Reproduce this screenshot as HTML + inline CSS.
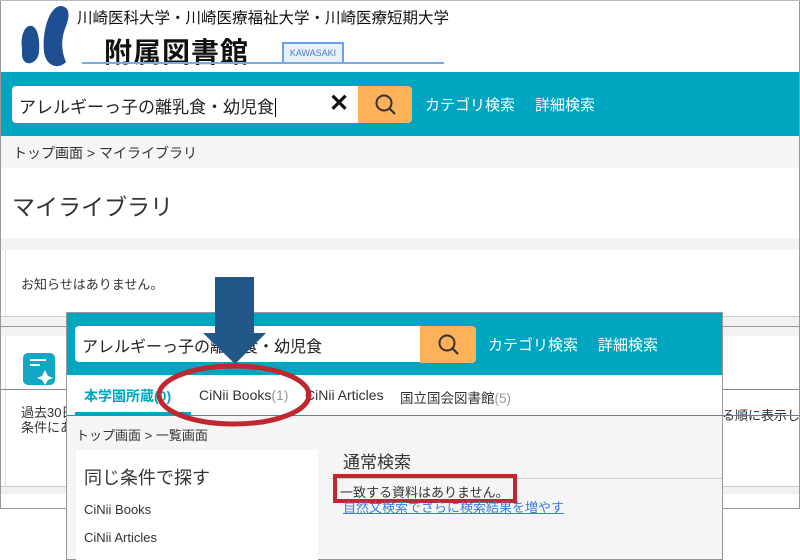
<!DOCTYPE html>
<html><head><meta charset="utf-8"><style>
*{margin:0;padding:0;box-sizing:border-box}
body{width:800px;height:560px;background:#fff;position:relative;overflow:hidden;font-family:"Liberation Sans","Noto Sans CJK JP",sans-serif;color:#333}
.a{position:absolute}
.t{white-space:nowrap}
</style></head><body>
<div class="a" style="left:0;top:0;width:800px;height:509px;border:1px solid #999;border-top:none;background:#fff"></div>
<div class="a" style="left:0;top:0;width:800px;height:1px;background:#bbb"></div>
<svg class="a" style="left:18px;top:4px" width="52" height="64" viewBox="0 0 52 64">
<path d="M4 44 C2 30 8 20 14 22 C20 24 22 36 21 48 C20 60 6 64 4 52Z" fill="#1e4f93"/>
<path d="M42 2 C52 2 52 12 48 22 C44 32 42 44 48 58 C40 66 28 62 26 48 C24 30 30 4 42 2Z" fill="#1e4f93"/>
</svg>
<div class="a t" style="left:77px;top:6px;font-size:15.5px;color:#111">川崎医科大学・川崎医療福祉大学・川崎医療短期大学</div>
<div class="a t" style="left:104px;top:31px;font-size:28px;font-weight:bold;color:#111;letter-spacing:1px">附属図書館</div>
<div class="a" style="left:282px;top:42px;width:62px;height:22px;border:2px solid #6aa0e8;background:#e8f0fc;font-size:9px;color:#4a7cc8;text-align:center;line-height:18px">KAWASAKI</div>
<div class="a" style="left:82px;top:62px;width:362px;height:2px;background:#7aa8e8"></div>
<div class="a" style="left:1px;top:72px;width:798px;height:64px;background:#00a6c0"></div>
<div class="a" style="left:12px;top:86px;width:346px;height:37px;background:#fff;border-radius:4px 0 0 4px"></div>
<div class="a t" style="left:19px;top:93px;font-size:17px;color:#222">アレルギーっ子の離乳食・幼児食<span style="border-left:1px solid #000;margin-left:1px"></span></div>
<div class="a t" style="left:329px;top:89px;font-size:24px;font-weight:bold;color:#111">✕</div>
<div class="a" style="left:358px;top:86px;width:54px;height:37px;background:#fdb25a;border-radius:0 4px 4px 0"></div>
<svg class="a" style="left:373px;top:92px" width="26" height="26"><circle cx="11" cy="11" r="7.5" fill="none" stroke="#333" stroke-width="2"/><line x1="16.5" y1="16.5" x2="22" y2="22" stroke="#333" stroke-width="2.2"/></svg>
<div class="a t" style="left:425px;top:94px;font-size:15px;color:#fff">カテゴリ検索</div>
<div class="a t" style="left:535px;top:94px;font-size:15px;color:#fff">詳細検索</div>
<div class="a" style="left:1px;top:136px;width:798px;height:32px;background:#f5f5f5"></div>
<div class="a t" style="left:13px;top:143px;font-size:14px;color:#333">トップ画面 &gt; マイライブラリ</div>
<div class="a t" style="left:12px;top:188px;font-size:23px;color:#333">マイライブラリ</div>
<div class="a" style="left:1px;top:238px;width:798px;height:12px;background:#f3f3f3"></div>
<div class="a" style="left:5px;top:250px;width:794px;height:66px;border-left:1px solid #ddd;background:#fff"></div>
<div class="a t" style="left:21px;top:274px;font-size:13px;color:#333">お知らせはありません。</div>
<div class="a" style="left:1px;top:316px;width:798px;height:20px;background:#f2f2f2;border-top:1px solid #ccc"></div>
<div class="a" style="left:1px;top:326px;width:798px;height:1px;background:#999"></div>
<div class="a" style="left:5px;top:336px;width:794px;height:150px;background:#fff;border-left:1px solid #ddd"></div>
<svg class="a" style="left:22px;top:352px" width="34" height="34"><rect x="1" y="1" width="32" height="32" rx="5" fill="#10a8c4"/><path d="M8 8h16M8 13h10" stroke="#fff" stroke-width="2"/><path d="M23 18 L26 24 L31 26 L26 28 L23 33 L20 28 L15 26 L20 24Z" fill="#fff"/></svg>
<div class="a" style="left:1px;top:389px;width:798px;height:1px;background:#888"></div>
<div class="a t" style="left:21px;top:405px;font-size:13px;line-height:15px;color:#333">過去30日<br>条件にあ</div>
<div class="a t" style="left:722px;top:405px;font-size:13px;color:#333">る順に表示しま</div>
<div class="a" style="left:1px;top:486px;width:798px;height:8px;background:#f0f0f0;border-top:1px solid #ccc"></div>
<div class="a" style="left:66px;top:312px;width:657px;height:248px;border:1px solid #999;background:#f5f5f5"></div>
<div class="a" style="left:67px;top:313px;width:655px;height:62px;background:#00a6c0"></div>
<div class="a" style="left:75px;top:326px;width:345px;height:36px;background:#fff;border-radius:4px 0 0 4px"></div>
<div class="a t" style="left:82px;top:333px;font-size:16px;color:#222">アレルギーっ子の離乳食・幼児食</div>
<div class="a" style="left:420px;top:326px;width:56px;height:37px;background:#fdb25a;border-radius:0 4px 4px 0"></div>
<svg class="a" style="left:436px;top:332px" width="26" height="26"><circle cx="11" cy="11" r="7.5" fill="none" stroke="#333" stroke-width="2"/><line x1="16.5" y1="16.5" x2="22" y2="22" stroke="#333" stroke-width="2.2"/></svg>
<div class="a t" style="left:488px;top:334px;font-size:15px;color:#fff">カテゴリ検索</div>
<div class="a t" style="left:598px;top:334px;font-size:15px;color:#fff">詳細検索</div>
<div class="a" style="left:67px;top:375px;width:655px;height:40px;background:#fff"></div>
<div class="a" style="left:67px;top:415px;width:733px;height:1px;background:#00a6c0"></div>
<div class="a" style="left:75px;top:412px;width:116px;height:3px;background:#00a6c0"></div>
<div class="a t" style="left:84px;top:386px;font-size:14px;font-weight:bold;color:#00a6c0">本学園所蔵(0)</div>
<div class="a t" style="left:199px;top:387px;font-size:14px;color:#333">CiNii Books<span style="color:#999">(1)</span></div>
<div class="a t" style="left:305px;top:387px;font-size:14px;color:#333">CiNii Articles</div>
<div class="a t" style="left:400px;top:387px;font-size:13.5px;color:#333">国立国会図書館<span style="color:#999">(5)</span></div>
<div class="a t" style="left:76px;top:425px;font-size:13px;color:#333">トップ画面 &gt; 一覧画面</div>
<div class="a" style="left:76px;top:450px;width:242px;height:110px;background:#fff"></div>
<div class="a t" style="left:84px;top:464px;font-size:18px;color:#333">同じ条件で探す</div>
<div class="a t" style="left:84px;top:502px;font-size:13px;color:#333">CiNii Books</div>
<div class="a t" style="left:84px;top:530px;font-size:13px;color:#333">CiNii Articles</div>
<div class="a t" style="left:343px;top:448px;font-size:17px;color:#333">通常検索</div>
<div class="a" style="left:330px;top:478px;width:392px;height:1px;background:#ccc"></div>
<div class="a t" style="left:340px;top:482px;font-size:13px;color:#333">一致する資料はありません。</div>
<div class="a" style="left:333px;top:474px;width:184px;height:29px;border:4px solid #c0282f"></div>
<div class="a t" style="left:343px;top:497px;font-size:13px;color:#3a7de0;text-decoration:underline">自然文検索でさらに検索結果を増やす</div>
<svg class="a" style="left:0;top:0" width="800" height="560">
<path d="M215 277 H254 V333 H266 L235 364 L203 333 H215Z" fill="#22578a"/>
<ellipse cx="234" cy="395" rx="75" ry="29" fill="none" stroke="#c0282f" stroke-width="5"/>
</svg>
</body></html>
